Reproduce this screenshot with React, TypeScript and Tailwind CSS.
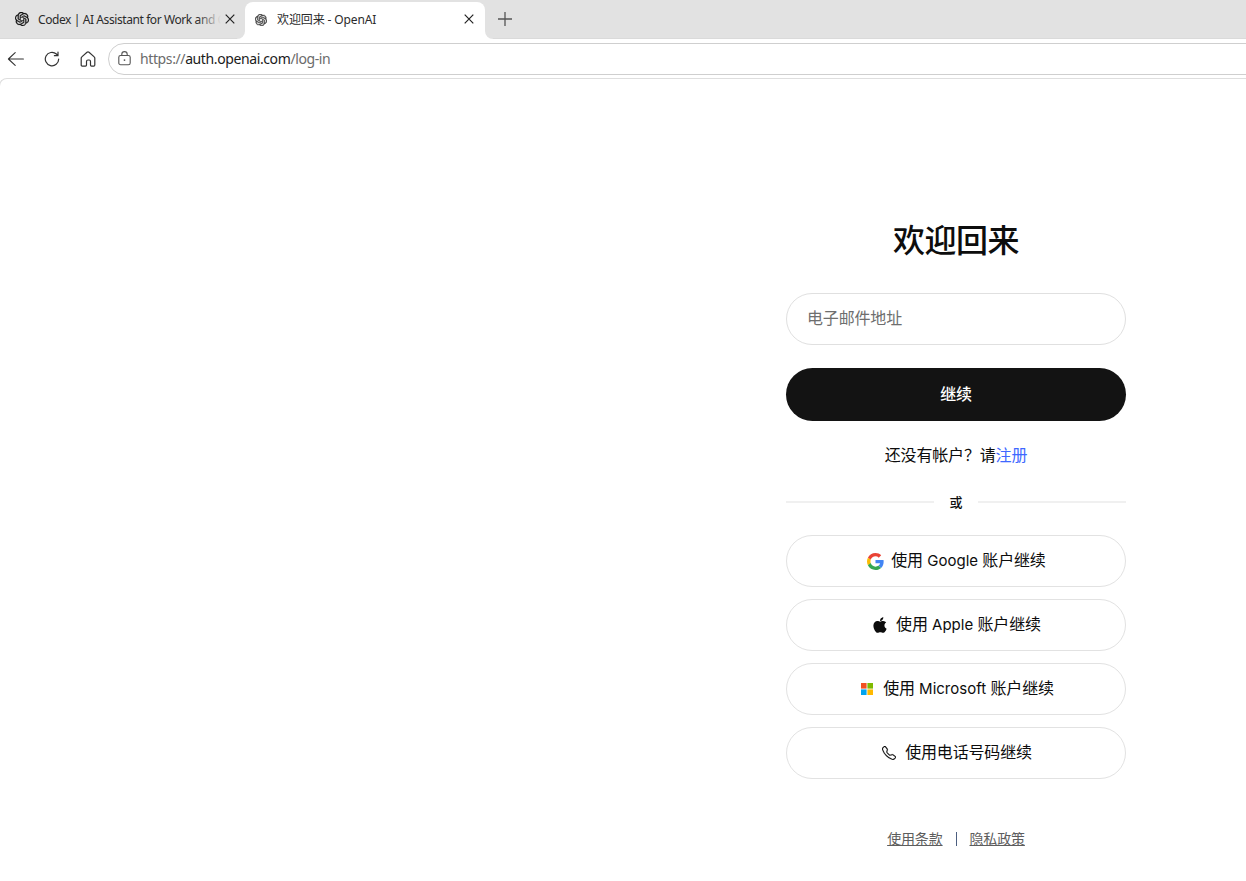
import type { ReactNode } from "react";
import { FaApple } from "react-icons/fa";
import { SiOpenai } from "react-icons/si";
import { BsTelephone } from "react-icons/bs";

function CloseIcon() {
  return (
    <svg width="10" height="10" viewBox="0 0 10 10" stroke="#222" strokeWidth="1.2" className="shrink-0">
      <path d="M.7.7l8.6 8.6M9.3.7L.7 9.3" />
    </svg>
  );
}

function TabStrip() {
  return (
    <div className="flex h-[39px] items-end border-b border-[#dadada] bg-[#e2e2e2] font-['Noto_Sans','Noto_Sans_CJK_SC',sans-serif] text-[12px] text-[#2b2b2b]">
      <div className="flex h-[37px] w-[245px] items-center pb-[2px] pl-[15px]">
        <SiOpenai className="size-[14px] shrink-0 stroke-[#111] stroke-[0.5] text-[#111]" />
        <div className="relative ml-[9px] w-[183px] overflow-hidden pt-[2px] leading-[18px] whitespace-nowrap tracking-[-0.41px]">
          Codex | AI Assistant for Work and C
          <div className="absolute inset-y-0 right-0 w-[24px] bg-gradient-to-r from-[#e2e2e2]/0 to-[#e2e2e2]" />
        </div>
        <div className="ml-[4px]"><CloseIcon /></div>
      </div>
      <div className="relative -mb-px flex h-[37px] w-[240px] items-center rounded-t-[8px] bg-white pb-[2px] pl-[10px]">
        <div className="absolute bottom-0 -left-2 size-2 overflow-hidden bg-white">
          <div className="size-2 rounded-br-[8px] bg-[#e2e2e2]" />
        </div>
        <div className="absolute bottom-0 -right-2 size-2 overflow-hidden bg-white">
          <div className="size-2 rounded-bl-[8px] bg-[#e2e2e2]" />
        </div>
        <SiOpenai className="size-[12px] shrink-0 stroke-[#444] stroke-[0.8] text-[#444]" />
        <span className="ml-[10px] grow whitespace-nowrap tracking-[-0.12px]">欢迎回来 - OpenAI</span>
        <div className="mr-[11px] pb-px"><CloseIcon /></div>
      </div>
      <div className="flex h-[37px] items-center pb-[2px] pl-[13px]">
        <svg width="14" height="14" viewBox="0 0 14 14" stroke="#555" strokeWidth="1.3">
          <path d="M7 0v14M0 7h14" />
        </svg>
      </div>
    </div>
  );
}

function Toolbar() {
  return (
    <div className="flex h-[39px] items-start overflow-hidden bg-white pt-[4px] pl-[7px]">
      <div className="flex h-8 w-[101px] shrink-0 items-center text-[#333]">
        <svg width="17" height="16" viewBox="0 0 17 16" fill="none" stroke="currentColor" strokeWidth="1.1" strokeLinecap="round" strokeLinejoin="round">
          <path d="M16.4 8H1.4M8.2 1.7L1.4 8l6.8 6.3" />
        </svg>
        <svg width="16" height="16" viewBox="0 0 16 16" fill="none" stroke="currentColor" strokeWidth="1.2" strokeLinecap="round" strokeLinejoin="round" className="ml-[20px]">
          <path d="M14.7 8A6.7 6.7 0 1 1 12.4 3L14 4.7M14 1.1v3.6h-3.6" />
        </svg>
        <svg width="16" height="16" viewBox="0 0 16 16" fill="none" stroke="currentColor" strokeWidth="1.2" strokeLinejoin="round" className="ml-[20px]">
          <path d="M1.2 7.1c0-.5.2-.9.6-1.2l5.2-4.7c.6-.5 1.4-.5 2 0l5.2 4.7c.4.3.6.7.6 1.2V14c0 .7-.4 1.1-1.1 1.1h-2.2c-.6 0-1-.4-1-1v-3.5c0-1-.5-1.6-1.3-1.6H8c-.9 0-1.5.6-1.5 1.6v3.5c0 .6-.4 1-1 1H2.3c-.7 0-1.1-.4-1.1-1.1V7.1z" />
        </svg>
      </div>
      <div className="flex h-8 w-[1160px] shrink-0 items-center rounded-full border border-[#cfcfcf] bg-white pl-[9px]">
        <svg width="13" height="15" viewBox="0 0 13 15" fill="none" stroke="#555" strokeWidth="1.1" className="-mt-[1px]">
          <rect x=".8" y="4.5" width="11.4" height="9.2" rx="1.8" />
          <path d="M3.8 4.5V3.3a2.7 2.7 0 0 1 5.4 0v1.2" />
          <circle cx="6.5" cy="9.1" r=".9" fill="#555" stroke="none" />
        </svg>
        <span className="ml-[9px] font-['Noto_Sans',sans-serif] text-[14px] leading-5 tracking-[-0.39px] text-[#6b6b6b]">
          https://<span className="text-[#1b1b1b]">auth.openai.com</span>/log-in
        </span>
      </div>
    </div>
  );
}

function GoogleLogo() {
  return (
    <svg width="17" height="17" viewBox="0 0 48 48" className="shrink-0">
      <path fill="#EA4335" d="M24 9.5c3.54 0 6.71 1.22 9.21 3.6l6.85-6.85C35.9 2.38 30.47 0 24 0 14.62 0 6.51 5.38 2.56 13.22l7.98 6.19C12.43 13.72 17.74 9.5 24 9.5z" />
      <path fill="#4285F4" d="M46.98 24.55c0-1.57-.15-3.09-.38-4.55H24v9.02h12.94c-.58 2.96-2.26 5.48-4.78 7.18l7.73 6c4.51-4.18 7.09-10.36 7.09-17.65z" />
      <path fill="#FBBC05" d="M10.53 28.59c-.48-1.45-.76-2.99-.76-4.59s.27-3.14.76-4.59l-7.98-6.19C.92 16.46 0 20.12 0 24c0 3.88.92 7.54 2.56 10.78l7.97-6.19z" />
      <path fill="#34A853" d="M24 48c6.48 0 11.93-2.13 15.89-5.81l-7.73-6c-2.15 1.45-4.92 2.3-8.16 2.3-6.26 0-11.57-4.22-13.47-9.91l-7.98 6.19C6.51 42.62 14.62 48 24 48z" />
    </svg>
  );
}

function MicrosoftLogo() {
  return (
    <svg width="12" height="12" viewBox="0 0 12 12">
      <path fill="#f25022" d="M0 0h5.6v5.6H0z" />
      <path fill="#7fba00" d="M6.4 0H12v5.6H6.4z" />
      <path fill="#00a4ef" d="M0 6.4h5.6V12H0z" />
      <path fill="#ffb900" d="M6.4 6.4H12V12H6.4z" />
    </svg>
  );
}

function Latin({ children }: { children: ReactNode }) {
  return <span className="text-[15px] tracking-[0.02px]"> {children} </span>;
}

function ProviderButton({ icon, children }: { icon: ReactNode; children: ReactNode }) {
  return (
    <button className="flex h-[52px] w-full items-center justify-center gap-[7px] rounded-full border border-[#e2e2e2] bg-white">
      <span className="flex w-[18px] items-center justify-center">{icon}</span>
      <span className="-mt-[2px] whitespace-nowrap">{children}</span>
    </button>
  );
}

function LoginForm() {
  return (
    <main className="ml-[786px] flex w-[340px] flex-col items-center text-[16px] leading-6 tracking-[-0.16px] text-[#0d0d0d]">
      <h1 className="mt-[142px] text-[32px] leading-[40px] font-medium tracking-[-0.5px]">欢迎回来</h1>
      <input
        placeholder="电子邮件地址"
        className="mt-[32px] h-[52px] w-full rounded-full border border-[#e0e0e0] px-[20px] pb-[2px] tracking-[-0.16px] placeholder:text-[#6e6e6e]"
      />
      <button className="mt-[23px] h-[53px] w-full rounded-full bg-[#131313] pb-[2px] font-medium text-white">继续</button>
      <p className="mt-[22px]">
        还没有帐户？请<span className="text-[#3e68ff]">注册</span>
      </p>
      <div className="mt-[25px] flex w-full items-center text-[13px] leading-5 font-medium">
        <div className="h-[2px] grow bg-[#f0f0f0]" />
        <span className="w-[44px] text-center">或</span>
        <div className="h-[2px] grow bg-[#f0f0f0]" />
      </div>
      <div className="mt-[23px] flex w-full flex-col gap-3">
        <ProviderButton icon={<GoogleLogo />}>使用<Latin>Google</Latin>账户继续</ProviderButton>
        <ProviderButton icon={<FaApple className="size-[18px]" />}>使用<Latin>Apple</Latin>账户继续</ProviderButton>
        <ProviderButton icon={<MicrosoftLogo />}>使用<Latin>Microsoft</Latin>账户继续</ProviderButton>
        <ProviderButton icon={<BsTelephone className="size-[14px] stroke-[#0d0d0d] stroke-[0.2]" />}>使用电话号码继续</ProviderButton>
      </div>
      <footer className="mt-[50px] flex items-center text-[14px] leading-5 text-[#5d5d5d]">
        <a className="underline">使用条款</a>
        <span className="mx-[13px] h-[14px] w-px bg-[#4c5f80]" />
        <a className="underline">隐私政策</a>
      </footer>
    </main>
  );
}

export default function App() {
  return (
    <div className="flex h-[881px] w-[1246px] flex-col overflow-hidden bg-white font-['Inter','Noto_Sans_CJK_SC',sans-serif]">
      <TabStrip />
      <Toolbar />
      <div className="-ml-px w-[1260px] grow rounded-tl-[8px] border-t border-l border-[#dedede] bg-white">
        <LoginForm />
      </div>
    </div>
  );
}
